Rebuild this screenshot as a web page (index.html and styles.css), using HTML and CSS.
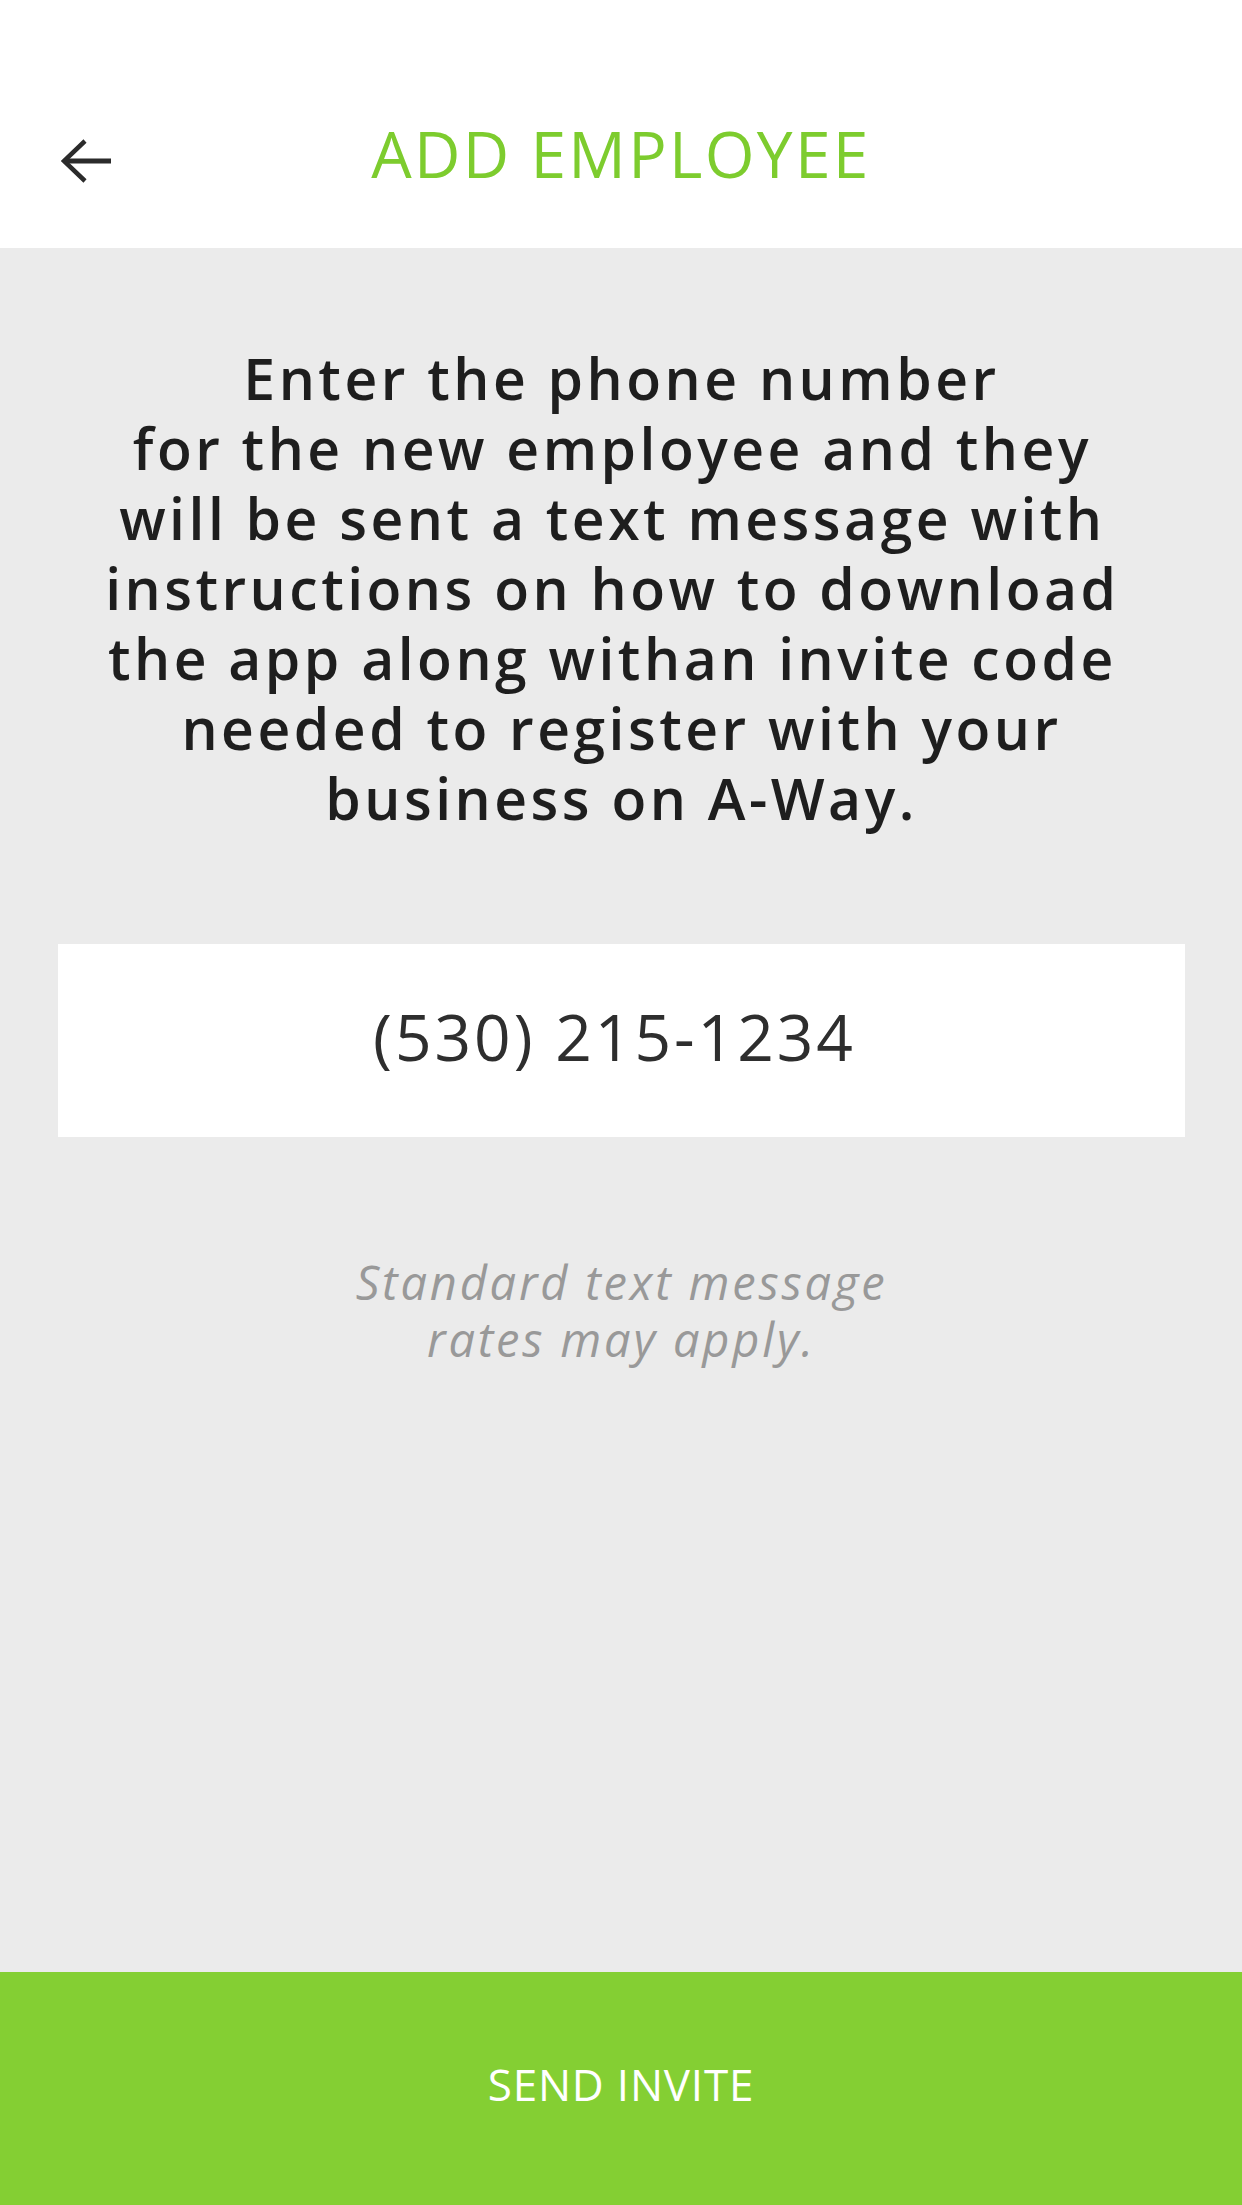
FILE: index.html
```html
<!DOCTYPE html>
<html lang="en">
<head>
<meta charset="utf-8">
<title>Add Employee</title>
<link rel="stylesheet" href="styles.css">
</head>
<body>
<div class="screen">
  <header class="header">
    <button class="back" aria-label="Back">
      <svg width="52" height="46" viewBox="0 0 52 46">
        <path d="M24 3 L3 23 L24 43" fill="none" stroke="#2b2b2b" stroke-width="4.5" stroke-linejoin="miter"/>
        <path d="M3 23 H50" fill="none" stroke="#2b2b2b" stroke-width="5"/>
      </svg>
    </button>
    <h1 class="title">ADD EMPLOYEE</h1>
  </header>
  <main class="content">
    <p class="intro">Enter the phone number<br>for the new employee and they&nbsp;<br>will be sent a text message with&nbsp;<br>instructions on how to download&nbsp;<br>the app along withan invite code&nbsp;<br>needed to register with your<br>business on A-Way.</p>
    <div class="phone-box">
      <span class="phone">(530) 215-1234</span>
    </div>
    <p class="note">Standard text message<br>rates may apply.</p>
  </main>
  <footer class="action">
    <span class="action-label">SEND INVITE</span>
  </footer>
</div>
</body>
</html>
```

FILE: styles.css
```css
* { box-sizing: border-box; }
html, body { margin: 0; padding: 0; }
body {
  font-family: "Open Sans", "Noto Sans", sans-serif;
  background: #ebebeb;
}
.screen {
  width: 1242px;
  height: 2205px;
  display: flex;
  flex-direction: column;
  background: #ebebeb;
}
.header {
  height: 248px;
  background: #ffffff;
  padding-top: 60px;
  display: flex;
  align-items: center;
  justify-content: center;
  position: relative;
  flex-shrink: 0;
}
.back {
  position: absolute;
  left: 61px;
  top: 138px;
  width: 52px;
  height: 46px;
  padding: 0;
  border: 0;
  background: none;
  display: block;
}
.back svg { display: block; }
.title {
  margin: 0;
  font-weight: 400;
  font-size: 64px;
  line-height: 1;
  color: #7dcc2e;
  letter-spacing: 2.3px;
}
.content {
  flex: 1;
  display: flex;
  flex-direction: column;
  align-items: center;
  padding: 95px 57px 0 58px;
}
.intro {
  margin: 0;
  text-align: center;
  font-weight: 600;
  font-size: 57px;
  line-height: 70px;
  letter-spacing: 3.5px;
  color: #1e1e1e;
}
.phone-box {
  margin-top: 111px;
  width: 100%;
  height: 193px;
  background: #ffffff;
  display: flex;
  align-items: center;
  justify-content: center;
}
.phone {
  font-size: 64px;
  line-height: 1;
  letter-spacing: 3px;
  color: #2e2e2e;
  padding-bottom: 8px;
  margin-right: 14px;
}
.note {
  margin: 117px 0 0;
  text-align: center;
  font-style: italic;
  font-size: 47px;
  line-height: 57px;
  letter-spacing: 2.8px;
  color: #999999;
}
.action {
  height: 233px;
  flex-shrink: 0;
  background: #84cf33;
  display: flex;
  align-items: center;
  justify-content: center;
  padding-bottom: 10px;
}
.action-label {
  color: #ffffff;
  font-size: 44px;
  font-weight: 400;
  letter-spacing: 0.8px;
  line-height: 1;
}
```
